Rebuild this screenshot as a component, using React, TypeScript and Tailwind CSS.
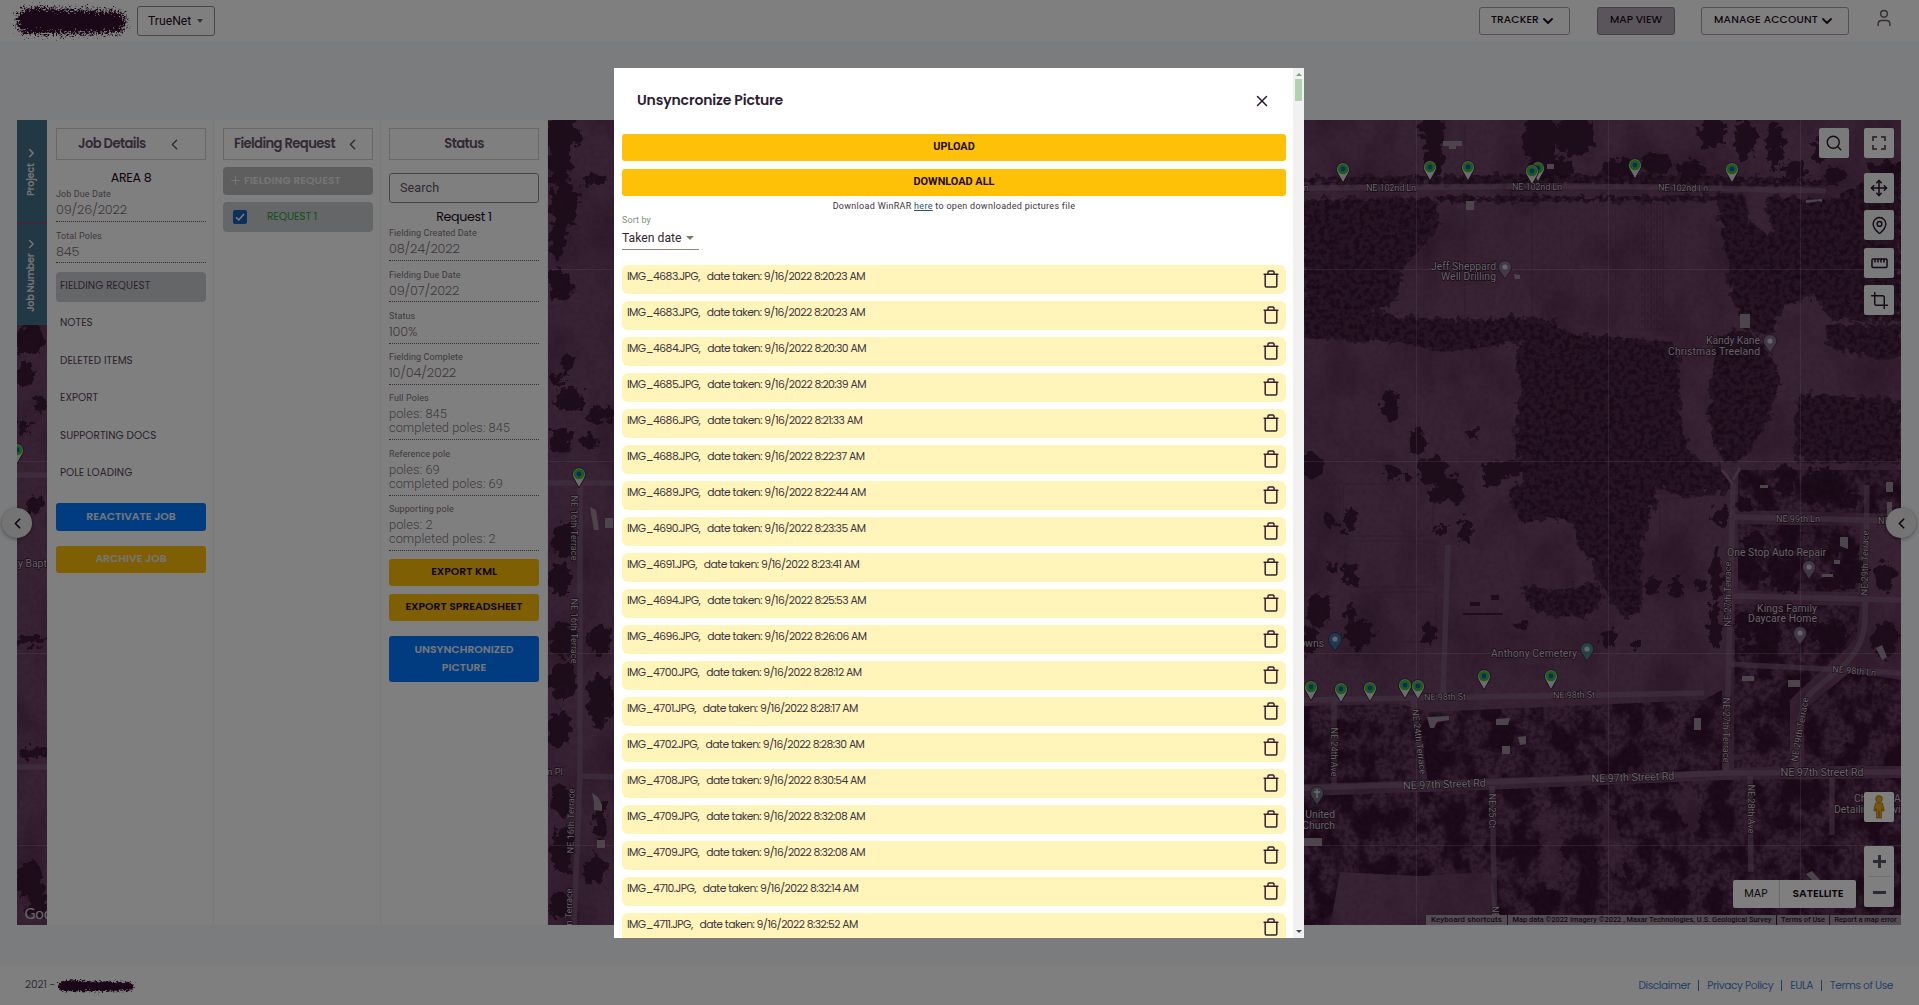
import React from 'react'
import { ChevronDown, ChevronLeft, Crop, MapPin, Move, Plus, Search, User, X } from 'lucide-react'

const poppins = "font-['Poppins',Inter,sans-serif]"

/* ---------- Map drawing ---------- */

const fields = '#704668'
const labelProps = { fontFamily: 'Roboto, sans-serif', fill: '#d0c5ce', stroke: '#2c1228', strokeWidth: 1.3, paintOrder: 'stroke' as const }

type Label = { t: string; x: number; y: number; s?: number; r?: number; w?: number; a?: 'start' | 'middle' | 'end' }

const roadLabels: Label[] = [
  { t: 'NE 102nd Ln', x: 1391, y: 191, w: 50 },
  { t: 'NE 102nd Ln', x: 1537, y: 190, w: 50 },
  { t: 'NE 102nd Ln', x: 1683, y: 191, w: 50, r: 1 },
  { t: 'n', x: 1306, y: 191 },
  { t: 'NE 98th St', x: 1445, y: 700, w: 42, r: -1 },
  { t: 'NE 98th St', x: 1574, y: 698, w: 42, r: -1 },
  { t: 'NE 99th Ln', x: 1798, y: 522, w: 44 },
  { t: 'NE', x: 1884, y: 524 },
  { t: 'NE 98th Ln', x: 1854, y: 674, w: 44, r: 5 },
  { t: 'NE 97th Street Rd', x: 1444.5, y: 788, s: 11, w: 83, r: -2 },
  { t: 'NE 97th Street Rd', x: 1633, y: 781, s: 11, w: 83, r: -2 },
  { t: 'NE 97th Street Rd', x: 1822, y: 776, s: 11, w: 83 },
  { t: 'NE 27th Terrace', x: 1731, y: 594, w: 65, r: -90 },
  { t: 'NE 27th Terrace', x: 1723, y: 730, w: 65, r: 90 },
  { t: 'NE 29th Terrace', x: 1868, y: 563, w: 65, r: -89 },
  { t: 'NE 29th Terrace', x: 1803, y: 730, w: 65, r: -80 },
  { t: 'NE 24th Ave', x: 1331, y: 752, w: 49, r: 90 },
  { t: 'NE 24th Terrace', x: 1416, y: 742, w: 65, r: 83 },
  { t: 'NE 25 Ct', x: 1489, y: 811, w: 35, r: 90 },
  { t: 'NE', x: 1492, y: 912, r: 90 },
  { t: 'NE 28th Ave', x: 1748, y: 809, w: 49, r: 90 },
  { t: 'NE 16th Terrace', x: 571, y: 528, w: 65, r: 90 },
  { t: 'NE 16th Terrace', x: 571, y: 631, w: 65, r: 90 },
  { t: 'NE 16th Terrace', x: 574, y: 821, w: 65, r: -89 },
  { t: 'n Terrace', x: 572, y: 907, w: 37, r: -89 },
  { t: 'n Pl', x: 555, y: 775 },
]

const places: Label[] = [
  { t: 'Jeff Sheppard', x: 1496, y: 270, a: 'end', w: 65 },
  { t: 'Well Drilling', x: 1496, y: 280, a: 'end', w: 55 },
  { t: 'Kandy Kane', x: 1760, y: 344, a: 'end', w: 54 },
  { t: 'Christmas Treeland', x: 1760, y: 355, a: 'end', w: 92 },
  { t: 'One Stop Auto Repair', x: 1826, y: 556, a: 'end', w: 99 },
  { t: 'Kings Family', x: 1817, y: 612, a: 'end', w: 60 },
  { t: 'Daycare Home', x: 1817, y: 622, a: 'end', w: 69 },
  { t: 'Anthony Cemetery', x: 1577, y: 657, a: 'end', w: 86 },
  { t: 'owns', x: 1324, y: 647, a: 'end' },
  { t: 'United', x: 1335, y: 818, a: 'end' },
  { t: 'Church', x: 1335, y: 829, a: 'end' },
  { t: 'Chris', x: 1854, y: 802, a: 'start' },
  { t: 'Detailing', x: 1834, y: 813, a: 'start' },
  { t: 'A', x: 1894, y: 802, a: 'start' },
  { t: 'vi', x: 1893, y: 813, a: 'start' },
  { t: 'y Bapt', x: 18, y: 567, a: 'start' },
]

const greenPins = [
  [1343, 169], [1430, 167], [1468, 167], [1538, 168], [1532, 171], [1635, 165], [1732, 169],
  [1311, 687], [1341, 689], [1370, 688], [1405, 685], [1418, 686], [1484, 676], [1551, 676],
  [579, 474], [17, 450],
]

const poiPins: [number, number, string][] = [
  [1505, 268, '#83738c'], [1770, 342, '#83738c'], [1809, 568, '#83738c'], [1800, 634, '#83738c'],
  [1317, 794, '#6f7480'], [1335, 640, '#3a74a8'], [1587, 650, '#4d8590'],
]

const roads = [
  'M1304 188L1560 186L1660 187L1826 191',
  'M1304 700L1704 693', 'M1304 788L1490 782L1728 773L1901 772',
  'M1733 484L1726 775', 'M1733 517L1901 521', 'M1733 596L1901 600',
  'M1867 485L1865 620Q1864 645 1845 664L1812 692Q1797 706 1796 770',
  'M1728 664L1901 673', 'M1750 776L1751 872', 'M1492 786L1495 925',
  'M1334 700L1334 786', 'M1413 700L1425 782', 'M1448 545L1443 695', 'M1832 778L1832 835',
  'M548 483L614 483', 'M580 483L580 776L574 925', 'M580 776L614 777', 'M17 475L47 475', 'M17 767L47 767',
]

const scatter: [number, number, number, number][] = [
  [1432, 132, 13, 22], [1434, 158, 11, 18], [1540, 140, 20, 28], [1575, 135, 22, 24], [1550, 168, 26, 12],
  [1712, 132, 14, 20], [1745, 140, 12, 22], [1655, 164, 18, 12], [1620, 168, 20, 10], [1690, 170, 16, 10], [1775, 145, 10, 26],
  [1820, 150, 8, 14], [1793, 170, 14, 10], [1835, 175, 14, 10], [1885, 170, 20, 10],
  [1390, 405, 9, 18], [1418, 442, 9, 14], [1432, 470, 16, 16], [1448, 488, 14, 14], [1455, 494, 10, 10], [1435, 496, 7, 8],
  [1474, 434, 6, 8], [1392, 472, 8, 9], [1406, 476, 5, 6], [1494, 474, 14, 14], [1513, 468, 12, 10],
  [1466, 530, 8, 15], [1443, 530, 9, 6], [1331, 520, 6, 8], [1350, 520, 8, 13], [1331, 568, 5, 6], [1351, 575, 8, 14],
  [1312, 465, 14, 14], [1359, 634, 16, 16], [1319, 610, 13, 18], [1351, 614, 7, 8], [1310, 640, 10, 16], [1430, 634, 9, 12], [1522, 624, 5, 6],
  [1652, 586, 8, 11], [1676, 586, 8, 11], [1700, 586, 6, 8], [1609, 640, 9, 10], [1635, 644, 5, 6],
  [1744, 505, 9, 8], [1720, 516, 8, 10], [1764, 488, 6, 6], [1785, 480, 12, 18], [1820, 486, 24, 20], [1850, 500, 12, 10],
  [1755, 545, 14, 14], [1790, 540, 10, 14], [1840, 545, 14, 12], [1860, 570, 10, 12], [1755, 575, 16, 10], [1785, 585, 14, 8], [1840, 582, 22, 9],
  [1884, 575, 12, 16], [1745, 625, 12, 16], [1770, 640, 14, 14], [1830, 635, 20, 16], [1885, 640, 14, 22], [1755, 650, 16, 8],
  [1716, 575, 6, 30], [1715, 625, 7, 26],
  [562, 135, 20, 20], [560, 165, 12, 25], [564, 205, 16, 25], [558, 240, 10, 22], [560, 285, 14, 18], [595, 180, 14, 6], [567, 365, 6, 12],
  [556, 380, 8, 9], [570, 400, 16, 12], [600, 415, 14, 10], [590, 442, 12, 8], [560, 440, 12, 14],
  [565, 540, 14, 20], [560, 580, 12, 18], [600, 640, 14, 16], [562, 640, 14, 20], [562, 680, 16, 20],
  [600, 700, 14, 30], [558, 730, 14, 20], [560, 800, 12, 18], [600, 820, 8, 20], [562, 850, 14, 26], [596, 870, 14, 16], [560, 905, 14, 14],
  [30, 340, 16, 16], [25, 375, 10, 16], [40, 405, 8, 10], [24, 425, 8, 8], [34, 505, 8, 10], [32, 640, 18, 6], [32, 752, 18, 7], [30, 880, 16, 20], [38, 905, 12, 14],
]

function MapDrawing() {
  return (
    <svg className="absolute inset-0 h-full w-full" viewBox="17 120 1884 805" preserveAspectRatio="none">
      <defs>
        <filter id="trees" x="-5%" y="-5%" width="110%" height="110%" colorInterpolationFilters="sRGB">
          <feTurbulence type="fractalNoise" baseFrequency="0.13" numOctaves="4" seed="4" result="n" />
          <feDisplacementMap in="SourceGraphic" in2="n" scale="17" xChannelSelector="R" yChannelSelector="G" />
          <feGaussianBlur stdDeviation="0.6" />
        </filter>
        <filter id="canopy" x="0" y="0" width="100%" height="100%" colorInterpolationFilters="sRGB">
          <feTurbulence type="fractalNoise" baseFrequency="0.2" numOctaves="4" seed="9" />
          <feColorMatrix values="0 0 0 0 0.19  0 0 0 0 0.05  0 0 0 0 0.17  0 4 0 0 -1.7" />
          <feComposite in2="SourceGraphic" operator="in" />
        </filter>
        <filter id="woods" x="0" y="0" width="100%" height="100%" colorInterpolationFilters="sRGB">
          <feTurbulence type="fractalNoise" baseFrequency="0.045 0.036" numOctaves="5" seed="23" />
          <feColorMatrix values="0 0 0 0 0.2  0 0 0 0 0.06  0 0 0 0 0.18  0 5 0 0 -2.1" />
          <feComposite in2="SourceGraphic" operator="in" />
        </filter>
        <filter id="soil" x="0" y="0" width="100%" height="100%" colorInterpolationFilters="sRGB">
          <feTurbulence type="fractalNoise" baseFrequency="0.02 0.015" numOctaves="5" seed="2" />
          <feColorMatrix values="0 0 0 0 0.22  0 0 0 0 0.08  0 0 0 0 0.2  0 0.9 0 0 -0.38" />
        </filter>
        <pattern id="rows" width="6" height="8" patternUnits="userSpaceOnUse">
          <path d="M1 0V8M4 0V5" stroke="#4c2846" strokeWidth="1" opacity=".5" />
        </pattern>
        <path
          id="forest"
          d="M1304 178L1420 176L1535 174L1720 176L1830 180L1830 186L1304 184ZM1304 200L1434 198L1440 222L1418 252L1402 270L1396 300L1372 312L1420 318L1440 318L1470 322L1520 316L1556 322L1566 336L1500 345L1440 352L1400 342L1304 338Z
             M1434 196L1720 196L1720 201L1440 202Z
             M1520 345L1560 332L1600 336L1672 342L1680 365L1681 425L1690 455L1715 465L1731 480L1729 492L1680 496L1660 488L1656 500L1644 540L1640 580L1642 610L1625 618L1605 590L1592 560L1577 545L1575 525L1545 516L1525 524L1512 510L1509 490L1524 480L1516 450L1515 420L1522 385L1516 365Z
             M1715 340L1735 330L1760 338L1775 365L1780 378L1768 420L1745 458L1728 464L1714 445L1708 415L1712 380Z
             M1798 394L1830 396L1901 400L1901 462L1800 464L1794 440Z
             M1825 325L1901 325L1901 356L1875 358L1850 352L1828 346Z
             M1718 193L1745 196L1752 225L1772 236L1768 210L1764 196L1830 200L1901 160L1901 320L1872 322L1830 318L1815 295L1785 305L1770 335L1745 330L1730 290L1728 262L1722 235Z
             M1522 586L1560 590L1598 582L1602 604L1585 618L1550 615L1530 608Z"
        />
        <path
          id="thicket"
          d="M1304 706L1400 704L1430 712L1704 700L1722 690L1722 770L1500 778L1304 784ZM1304 796L1484 790L1725 780L1901 778L1901 925L1500 925L1490 872L1420 876L1340 872L1330 925L1304 925Z
             M1735 604L1860 606L1856 640L1800 690L1790 700L1790 766L1734 768ZM1804 710L1850 672L1901 680L1901 766L1804 766ZM1738 470L1901 470L1901 514L1738 510ZM1738 524L1860 526L1858 592L1738 590Z"
        />
        <g id="pin">
          <path d="M0 15L-5.6 5A7 7.4 0 1 1 5.6 5Z" fill="#d8d8d8" stroke="#32182e" strokeWidth="1" />
          <circle r="5.8" fill="#34bc34" />
          <circle r="2.6" fill="#1552c0" />
        </g>
      </defs>
      <rect x="17" y="120" width="1884" height="805" fill={fields} />
      <rect x="17" y="120" width="1884" height="805" filter="url(#soil)" />
      <rect x="1535" y="203" width="150" height="128" fill="url(#rows)" opacity=".35" />
      <rect x="1640" y="203" width="24" height="128" fill="url(#rows)" />
      <rect x="1304" y="620" width="120" height="78" fill="url(#rows)" opacity=".5" />
      <rect x="1520" y="622" width="190" height="70" fill="url(#rows)" opacity=".3" />

      <g fill="none" stroke="#5e3a57" strokeWidth="1">
        <rect x="1300" y="484" width="40" height="52" rx="6" />
        <rect x="1343" y="484" width="90" height="52" rx="6" />
        <rect x="1345" y="541" width="90" height="46" rx="6" />
        <rect x="1374" y="592" width="62" height="50" rx="6" />
        <path d="M1465 124V206V330M1532 205V330M1660 570V500L1725 494M1642 570H1710" />
      </g>

      <use href="#thicket" fill="#5a3454" opacity=".5" />
      <use href="#thicket" filter="url(#woods)" opacity=".85" />
      <g filter="url(#trees)">
        <use href="#forest" fill="#4a2845" />
        <g fill="#371831" opacity=".9">
          {scatter.map(([x, y, rx, ry], i) => (
            <ellipse key={i} cx={x} cy={y} rx={rx * 0.9} ry={ry * 0.9} />
          ))}
        </g>
      </g>
      <use href="#forest" filter="url(#canopy)" opacity=".7" />
      <use href="#thicket" filter="url(#canopy)" opacity=".45" />
      <rect x="17" y="120" width="1884" height="805" filter="url(#canopy)" opacity=".08" />
      <path d="M1540 800q20 10 22 50t-14 40q-10-50-8-90zM1600 800q18 8 20 34t10 50q-30-10-30-84zM1680 780l24 20-10 40q-20-20-14-60z" fill={fields} opacity=".6" filter="url(#trees)" />

      <g fill="none" stroke="#826480" strokeWidth="5.5" opacity=".6">
        {roads.map((d) => (
          <path key={d} d={d} />
        ))}
      </g>
      <path d="M1733 484L1722 470M1733 480L1740 468" stroke="#846080" strokeWidth="3" />

      <g fill="#9a8a98">
        <path d="M1443 141h19v5h-6v3h-7v-3h-6zM1806 200l16-1v3l-4-1-4 1-8 1zM1466 201h8v9h-8zM1740 314h10v14h-10zM1886 482h7v10h-7zM1887 502h5v20h-5zM1840 537h8v12l-8-3zM1822 574h11v3h-11zM1427 717l22-1v4l-12 2-3 6h-4zM1496 719l14-1-2 7h-12zM1518 737l8-1v8l-6 1zM1502 746h8v8h-8zM1694 718h7v12h-7zM1742 676h12v5h-12zM1788 680h12v7h-12zM1806 874l6-3 8 9-4 4zM1304 838h18v8h-18z" />
        <path d="M1760 485h8v3h-8zM1834 560h6v4h-6zM1876 648l6-3 5 12-5 3zM590 507l6 3 3 20-5 0zM605 518h8v10h-8zM592 793l6 4 4 8v6l-8-1v-8zM597 840h8v8h-8zM1547 164h7v5h-7zM1514 274l6 1v4h-5z" />
        <path d="M1463 613h40v2h-40zM1470 602h10v4h-10zM1491 595h8v5h-8z" fill="#3a1a36" />
      </g>

      <path d="M1416.5 120V925M1608.5 120V925M1800.5 120V925M17 269.5H1901M17 461.5H1901M17 653.5H1901M17 845.5H1901" stroke="#b39ab0" strokeWidth=".8" opacity=".35" />

      {roadLabels.map((l, i) => (
        <text key={i} {...labelProps} x={l.x} y={l.y} fontSize={l.s ?? 9.2} textAnchor="middle" textLength={l.w} transform={l.r ? `rotate(${l.r} ${l.x} ${l.y})` : undefined}>
          {l.t}
        </text>
      ))}
      {places.map((l, i) => (
        <text key={i} {...labelProps} x={l.x} y={l.y} fontSize="10.4" textAnchor={l.a} textLength={l.w}>
          {l.t}
        </text>
      ))}
      {poiPins.map(([x, y, c], i) => (
        <g key={i} transform={`translate(${x} ${y})`}>
          <path d="M0 11L-5 3.5A6.6 6.6 0 1 1 5 3.5Z" fill={c} stroke="#3c2238" strokeWidth=".8" />
          {c === '#6f7480' ? <path d="M0-5V4M-3-2H3" stroke="#ddd" strokeWidth="1.3" /> : <circle r="2.6" cy="-1" fill="#d0c8d0" />}
        </g>
      ))}
      {greenPins.map(([x, y], i) => (
        <use key={i} href="#pin" transform={`translate(${x} ${y}) scale(.92)`} />
      ))}
      <text x="24.5" y="919" fontSize="15" fontFamily="Lato, sans-serif" fill="#d4cfd4">
        Google
      </text>
    </svg>
  )
}

/* ---------- Map controls ---------- */

function MapButton({ className = '', children }: { className?: string; children: React.ReactNode }) {
  return <button className={`flex h-[30px] w-[30px] items-center justify-center rounded-[2px] bg-[#f2f4f4] text-[#2c1028] ${className}`}>{children}</button>
}

function MapControls() {
  return (
    <>
      <div className="absolute top-[8px] right-[7px] flex items-start gap-[15px]">
        <MapButton>
          <Search size={18} strokeWidth={1.8} />
        </MapButton>
        <div className="flex flex-col">
          <MapButton className="bg-white text-[#75606f]">
            <svg width="14" height="14" viewBox="0 0 14 14" fill="none" stroke="currentColor" strokeWidth="2">
              <path d="M1 5V1h4M9 1h4v4M13 9v4H9M5 13H1V9" />
            </svg>
          </MapButton>
          <MapButton className="mt-[15px]">
            <Move size={18} strokeWidth={2} />
          </MapButton>
          <MapButton className="mt-[7px]">
            <MapPin size={19} strokeWidth={1.8} />
          </MapButton>
          <MapButton className="mt-[8px]">
            <svg width="17" height="11" viewBox="0 0 17 11" fill="none" stroke="currentColor" strokeWidth="1.5">
              <rect x="1" y="1" width="15" height="8.6" rx="1" />
              <path d="M4 1v3.4M7 1v3.4M10 1v3.4M13 1v3.4" />
            </svg>
          </MapButton>
          <MapButton className="mt-[7px]">
            <Crop size={19} strokeWidth={1.8} />
          </MapButton>
        </div>
      </div>
      <div className="absolute right-[7px] bottom-[103px]">
        <MapButton className="bg-white">
          <svg width="12" height="24" viewBox="0 0 12 24" fill="#f0ad12" stroke="#8a6210" strokeWidth=".6">
            <circle cx="6" cy="4" r="3.4" />
            <path d="M2.5 8h7l1.8 7.5-1.6.6-.9-2.6-.4 9.7H6.6L6 16l-.6 7.2H3.6l-.4-9.7-.9 2.6-1.6-.6z" />
          </svg>
        </MapButton>
      </div>
      <div className="absolute right-[7px] bottom-[18px] flex h-[61px] w-[30px] flex-col items-center rounded-[2px] bg-white text-[#5d5566]">
        <span className="flex h-[30px] items-center">
          <svg width="13" height="13" viewBox="0 0 13 13" stroke="currentColor" strokeWidth="3">
            <path d="M6.5 0v13M0 6.5h13" />
          </svg>
        </span>
        <span className="h-px w-[23px] bg-[#dedede]" />
        <span className="flex h-[30px] items-center">
          <svg width="13" height="3" viewBox="0 0 13 3">
            <path d="M0 0h13v3H0z" fill="currentColor" />
          </svg>
        </span>
      </div>
      <div className={`absolute right-[45px] bottom-[17px] flex h-[28px] rounded-[2px] bg-white text-[11px] leading-[27px] text-[#1f0a1c] ${poppins}`}>
        <span className="w-[47px] border-r border-[#d5d5d5] text-center tracking-[0.1px]">MAP</span>
        <span className="w-[76px] text-center text-[10.8px] font-semibold">SATELLITE</span>
      </div>
      <div className="absolute right-0 bottom-0 flex h-[10px] gap-px font-['Roboto'] text-[7.4px] leading-[10px] font-medium whitespace-nowrap text-[#2c1228]">
        <span className="w-[81px] bg-[#a798a5] text-center text-[7.8px] tracking-[0.15px]">Keyboard shortcuts</span>
        <span className="w-[268px] bg-[#a798a5] text-center">Map data ©2022 Imagery ©2022 , Maxar Technologies, U.S. Geological Survey</span>
        <span className="w-[52px] bg-[#a798a5] text-center">Terms of Use</span>
        <span className="w-[71px] bg-[#a798a5] text-center">Report a map error</span>
      </div>
    </>
  )
}

/* ---------- Side panels ---------- */

function Panel({ children, className = 'pl-[9px]' }: { children: React.ReactNode; className?: string }) {
  return <section className={`h-full w-[167px] border-r border-[#f1f3f6] bg-white pt-[8px] ${className}`}>{children}</section>
}

function PanelTitle({ children, className = '' }: { children: React.ReactNode; className?: string }) {
  return (
    <div className={`flex h-[32px] w-[150px] items-center border border-[#d0d0d0] text-[13.2px] font-semibold tracking-[-0.6px] whitespace-nowrap text-[#66536a] ${poppins} ${className}`}>
      {children}
    </div>
  )
}

function Field({ label, lines, className }: { label: string; lines: string[]; className: string }) {
  const face = lines.length > 1 ? "mt-[2px] font-['Roboto'] tracking-[0.05px]" : "mt-[2px] font-['Poppins',Inter,sans-serif] tracking-[-0.15px]"
  return (
    <div className={`flex w-[150px] flex-col border-b border-dotted border-[#6a5a68] text-[#7d717c] ${className}`}>
      <span className="font-['Roboto'] text-[9px] leading-[14px] tracking-[0.1px]">{label}</span>
      <div className={`text-[12.8px] leading-[14px] font-light ${face}`}>
        {lines.map((l) => (
          <div key={l}>{l}</div>
        ))}
      </div>
    </div>
  )
}

function PanelButton({ children, className }: { children: React.ReactNode; className: string }) {
  return <button className={`block w-[150px] rounded-[3px] text-center text-[10.8px] font-semibold ${poppins} ${className}`}>{children}</button>
}

function SideTab({ label, className }: { label: string; className: string }) {
  return (
    <div className={`flex w-[30px] items-center justify-center bg-[#43728a] text-[#e8e4e8] ${className}`}>
      <span className={`flex -rotate-90 items-center gap-[3px] text-[9.8px] font-semibold tracking-[-0.3px] whitespace-nowrap ${poppins}`}>
        {label}
        <ChevronDown size={14} strokeWidth={2.6} />
      </span>
    </div>
  )
}

const menu = ['NOTES', 'DELETED ITEMS', 'EXPORT', 'SUPPORTING DOCS', 'POLE LOADING']

function SidePanels() {
  return (
    <div className="relative flex h-full w-[531px]">
      <div className="flex w-[30px] flex-col">
        <SideTab label="Project" className="h-[102px]" />
        <span className="h-[2px] bg-[#8f4a70]" />
        <SideTab label="Job Number" className="h-[101px]" />
      </div>
      <Panel>
        <PanelTitle className="pl-[21px]">
          Job Details
          <ChevronLeft size={17} strokeWidth={2} className="ml-[20px]" />
        </PanelTitle>
        <h2 className={`mt-[10px] w-[150px] text-center text-[12.6px] leading-[16px] tracking-[-0.3px] text-[#220a20] ${poppins}`}>AREA 8</h2>
        <Field label="Job Due Date" lines={['09/26/2022']} className="mt-[1px] h-[35px]" />
        <Field label="Total Poles" lines={['845']} className="mt-[7px] h-[34px]" />
        <nav className={`mt-[9px] flex flex-col text-[10.4px] leading-[28px] tracking-[0.05px] text-[#5a4558] ${poppins}`}>
          <a className="h-[30px] w-[150px] rounded-[4px] bg-[#cacdd0] pl-[4px]">FIELDING REQUEST</a>
          {menu.map((m) => (
            <a key={m} className="mt-[7.4px] h-[30px] pl-[4px]">
              {m}
            </a>
          ))}
        </nav>
        <PanelButton className="mt-[14px] h-[28px] bg-[#0079ff] leading-[26px] text-[#e8eef8]">REACTIVATE JOB</PanelButton>
        <PanelButton className="mt-[15px] h-[27px] bg-[#ffbf06] leading-[24px] text-[#efe6f0]">ARCHIVE JOB</PanelButton>
      </Panel>
      <Panel>
        <PanelTitle className="pl-[10px]">
          Fielding Request
          <ChevronLeft size={17} strokeWidth={2} className="ml-[9px]" />
        </PanelTitle>
        <div className={`mt-[7px] flex h-[28px] w-[150px] items-center rounded-[4px] bg-[#bcbdbf] pb-px pl-[6px] text-[10.6px] font-semibold tracking-[0.15px] whitespace-nowrap text-[#ece8ec] ${poppins}`}>
          <Plus size={13} strokeWidth={2} className="mr-[2px]" />
          FIELDING REQUEST
        </div>
        <div className="mt-[7px] flex h-[30px] w-[150px] items-center rounded-[4px] bg-[#cacdd0] pl-[10px]">
          <span className="flex h-[14px] w-[14px] items-center justify-center rounded-[2px] bg-[#1263b8]">
            <svg width="10" height="10" viewBox="0 0 10 10" fill="none" stroke="#fff" strokeWidth="1.5">
              <path d="M1 5.2L3.8 8L9 2" />
            </svg>
          </span>
          <span className={`ml-[20px] text-[10.6px] tracking-[-0.1px] text-[#26a32c] ${poppins}`}>REQUEST 1</span>
        </div>
      </Panel>
      <Panel className="pl-[8px]">
        <PanelTitle className="justify-center">Status</PanelTitle>
        <div className="mt-[13px] flex h-[30px] w-[150px] items-center rounded-[3px] border border-[#8f8f8f] pl-[10px] font-['Roboto'] text-[12.6px] tracking-[0.1px] text-[#63555f]">Search</div>
        <h2 className={`mt-[6px] w-[150px] text-center text-[12.6px] leading-[16px] tracking-[-0.3px] text-[#220a20] ${poppins}`}>Request 1</h2>
        <Field label="Fielding Created Date" lines={['08/24/2022']} className="mt-[1px] h-[35px]" />
        <Field label="Fielding Due Date" lines={['09/07/2022']} className="mt-[7px] h-[34px]" />
        <Field label="Status" lines={['100%']} className="mt-[7px] h-[35px]" />
        <Field label="Fielding Complete" lines={['10/04/2022']} className="mt-[6px] h-[35px]" />
        <Field label="Full Poles" lines={['poles: 845', 'completed poles: 845']} className="mt-[6px] h-[49px]" />
        <Field label="Reference pole" lines={['poles: 69', 'completed poles: 69']} className="mt-[7px] h-[49px]" />
        <Field label="Supporting pole" lines={['poles: 2', 'completed poles: 2']} className="mt-[6px] h-[49px]" />
        <PanelButton className="mt-[8px] h-[27px] bg-[#ffbf06] pb-[2px] leading-[24px] text-[#1d0a1b]">EXPORT KML</PanelButton>
        <PanelButton className="mt-[8px] h-[27px] bg-[#ffbf06] pb-[2px] leading-[24px] text-[#1d0a1b]">EXPORT SPREADSHEET</PanelButton>
        <PanelButton className="mt-[15px] h-[46px] bg-[#0079ff] leading-[18px] text-[#e8eef8]">
          UNSYNCHRONIZED
          <br />
          PICTURE
        </PanelButton>
      </Panel>
    </div>
  )
}

/* ---------- Header / footer ---------- */

function Scribble({ width, height, seed }: { width: number; height: number; seed: number }) {
  const outline = `M${width * 0.05} ${height * 0.34}Q${width * 0.12} ${height * 0.1} ${width * 0.3} ${height * 0.2}L${width * 0.94} ${height * 0.3}Q${width * 1.02} ${height * 0.55} ${width * 0.94} ${height * 0.82}L${width * 0.5} ${height * 0.86}L${width * 0.1} ${height * 0.86}Q${width * 0.02} ${height * 0.7} ${width * 0.05} ${height * 0.34}Z`
  return (
    <svg width={width} height={height} viewBox={`0 0 ${width} ${height}`} className="overflow-visible">
      <filter id={`rough${seed}`} x="-10%" y="-30%" width="120%" height="160%" colorInterpolationFilters="sRGB">
        <feTurbulence type="fractalNoise" baseFrequency="0.55" numOctaves="3" seed={seed} />
        <feDisplacementMap in="SourceGraphic" scale={height / 2} xChannelSelector="R" yChannelSelector="G" />
        <feGaussianBlur stdDeviation="0.7" />
      </filter>
      <path d={outline} fill="#350f30" stroke="#350f30" strokeWidth={height / 9} strokeOpacity=".45" filter={`url(#rough${seed})`} />
    </svg>
  )
}

function Header() {
  const btn = `flex h-[28px] items-center rounded-[3px] border pb-[2px] text-[10.6px] font-medium whitespace-nowrap text-[#220a20] ${poppins}`
  return (
    <header className="flex h-[41px] items-start bg-white">
      <div className="mt-[2px] ml-[13px] w-[117px]">
        <Scribble width={114} height={36} seed={3} />
      </div>
      <div className="mt-[6px] ml-[7px] flex h-[30px] w-[78px] items-center rounded-[3px] border border-[#8f8f8f] pl-[10px] font-['Roboto'] text-[12.2px] text-[#220a20]">
        TrueNet
        <span className="ml-[6px] border-x-[3.5px] border-t-[4px] border-x-transparent border-t-[#6f636e]" />
      </div>
      <div className="flex-1" />
      <div className={`${btn} mt-[7px] w-[91px] border-[#a8a0a6] pl-[11px] tracking-[0.1px]`}>
        TRACKER
        <ChevronDown size={16} strokeWidth={2.8} className="mt-[2px] ml-[1px]" />
      </div>
      <div className={`${btn} mt-[7px] ml-[27px] w-[78px] justify-center border-[#8b788c] bg-[#b4abb6]`}>MAP VIEW</div>
      <div className={`${btn} mt-[7px] ml-[26px] w-[148px] border-[#a8a0a6] pl-[12px] tracking-[0.2px]`}>
        MANAGE ACCOUNT
        <ChevronDown size={16} strokeWidth={2.8} className="mt-[2px] ml-[1px]" />
      </div>
      <User size={20} strokeWidth={1.7} className="mt-[8px] mr-[25px] ml-[25px] text-[#6c5a6a]" />
    </header>
  )
}

function Footer() {
  return (
    <footer className={`flex h-[40px] items-center bg-white pr-[26px] pl-[25px] text-[10.6px] tracking-[-0.4px] ${poppins}`}>
      <span className="mb-[1px] tracking-[-0.1px] text-[#6b5a69]">2021 -</span>
      <Scribble width={80} height={15} seed={8} />
      <div className="mt-[1px] ml-auto flex items-center text-[#4a83c8]">
        <a>Disclaimer</a>
        <i className="mx-[8px] h-[11px] w-px bg-[#3f7cc4]" />
        <a>Privacy Policy</a>
        <i className="mx-[8px] h-[11px] w-px bg-[#3f7cc4]" />
        <a>EULA</a>
        <i className="mx-[8px] h-[11px] w-px bg-[#3f7cc4]" />
        <a>Terms of Use</a>
      </div>
    </footer>
  )
}

/* ---------- Modal ---------- */

const pictures: [string, string][] = [
  ['4683', '8:20:23'], ['4683', '8:20:23'], ['4684', '8:20:30'], ['4685', '8:20:39'], ['4686', '8:21:33'],
  ['4688', '8:22:37'], ['4689', '8:22:44'], ['4690', '8:23:35'], ['4691', '8:23:41'], ['4694', '8:25:53'],
  ['4696', '8:26:06'], ['4700', '8:28:12'], ['4701', '8:28:17'], ['4702', '8:28:30'], ['4708', '8:30:54'],
  ['4709', '8:32:08'], ['4709', '8:32:08'], ['4710', '8:32:14'], ['4711', '8:32:52'],
]

function TrashIcon() {
  return (
    <svg width="16" height="18" viewBox="0 0 16 18" fill="none" stroke="#35203a" strokeWidth="1.5">
      <path d="M.6 4.2h14.8M2.2 4.2v11.6q0 1.2 1.2 1.2h9.2q1.2 0 1.2-1.2V4.2M5 4V2.2Q5 1 6.2 1h3.6Q11 1 11 2.2V4" />
    </svg>
  )
}

function Modal() {
  return (
    <div className="flex h-[870px] w-[690px] overflow-hidden bg-white">
      <div className="h-full flex-1 overflow-hidden pr-[7px] pl-[8px]">
        <div className="flex h-[66px] items-center justify-between pr-[15px] pl-[15px] text-[#2c1c34]">
          <h1 className={`pb-[2px] text-[14px] font-semibold tracking-[-0.15px] ${poppins}`}>Unsyncronize Picture</h1>
          <X size={18} strokeWidth={2} />
        </div>
        <button className="block h-[27px] w-full rounded-[3px] bg-[#ffc107] pb-[2px] font-['Roboto'] text-[10.9px] leading-[25px] font-bold text-[#220a20]">UPLOAD</button>
        <button className="mt-[8px] block h-[27px] w-full rounded-[3px] bg-[#ffc107] pb-[2px] font-['Roboto'] text-[10.9px] leading-[25px] font-bold text-[#220a20]">DOWNLOAD ALL</button>
        <p className="mt-[3px] text-center font-['Roboto'] text-[9px] leading-[14px] tracking-[0.3px] text-[#3f3440]">
          Download WinRAR <a className="text-[#2c5578] underline">here</a> to open downloaded pictures file
        </p>
        <div className="flex w-[77px] flex-col border-b border-[#8f8577] font-['Roboto']">
          <span className="text-[9px] leading-[14px] tracking-[0.1px] text-[#7e8f7c]">Sort by</span>
          <div className="flex h-[22px] items-center text-[12.2px] text-[#33262f]">
            Taken date
            <span className="ml-[5px] border-x-[4px] border-t-[4px] border-x-transparent border-t-[#77806f]" />
          </div>
        </div>
        <ul className="mt-[15px] flex flex-col gap-[7px]">
          {pictures.map(([n, t], i) => (
            <li key={i} className={`flex h-[29px] shrink-0 justify-between rounded-[6px] bg-[#fff4ba] pr-[7px] pl-[5px] text-[10.8px] leading-[24px] tracking-[-0.55px] whitespace-pre text-[#40343f] ${poppins}`}>
              <span>{`IMG_${n}.JPG,   date taken: 9/16/2022 ${t} AM`}</span>
              <span className="mt-[5px] block h-[18px] leading-[0]">
                <TrashIcon />
              </span>
            </li>
          ))}
        </ul>
      </div>
      <div className="flex h-full w-[11px] flex-col items-center bg-[#f1f1f1]">
        <span className="mt-[5px] border-x-[3px] border-b-[3px] border-x-transparent border-b-[#7f9a7d]" />
        <span className="mt-[3px] h-[22px] w-[7px] bg-[#aed3ae]" />
        <span className="mt-auto mb-[5px] border-x-[3px] border-t-[3px] border-x-transparent border-t-[#4c444c]" />
      </div>
    </div>
  )
}

function EdgeToggle({ className }: { className: string }) {
  return (
    <button className={`absolute top-[388px] flex h-[30px] w-[30px] items-center justify-center rounded-full bg-[#e9e9e9] text-[#220a20] shadow-[0_1px_4px_rgba(0,0,0,0.4)] ${className}`}>
      <ChevronLeft size={17} strokeWidth={2.4} />
    </button>
  )
}

export default function App() {
  return (
    <div className="relative flex h-[1005px] w-[1919px] flex-col overflow-hidden bg-[#f5f8fb]">
      <Header />
      <main className="flex-1 pt-[79px] pr-[18px] pl-[17px]">
        <div className="relative h-[805px] w-full">
          <div className="h-full w-full overflow-hidden">
            <MapDrawing />
            <SidePanels />
            <MapControls />
          </div>
          <EdgeToggle className="-left-[15px]" />
          <EdgeToggle className="-right-[15px]" />
        </div>
      </main>
      <Footer />
      <div className="absolute inset-0 flex items-start justify-center bg-black/50 pt-[68px] pr-[1px]">
        <Modal />
      </div>
    </div>
  )
}
